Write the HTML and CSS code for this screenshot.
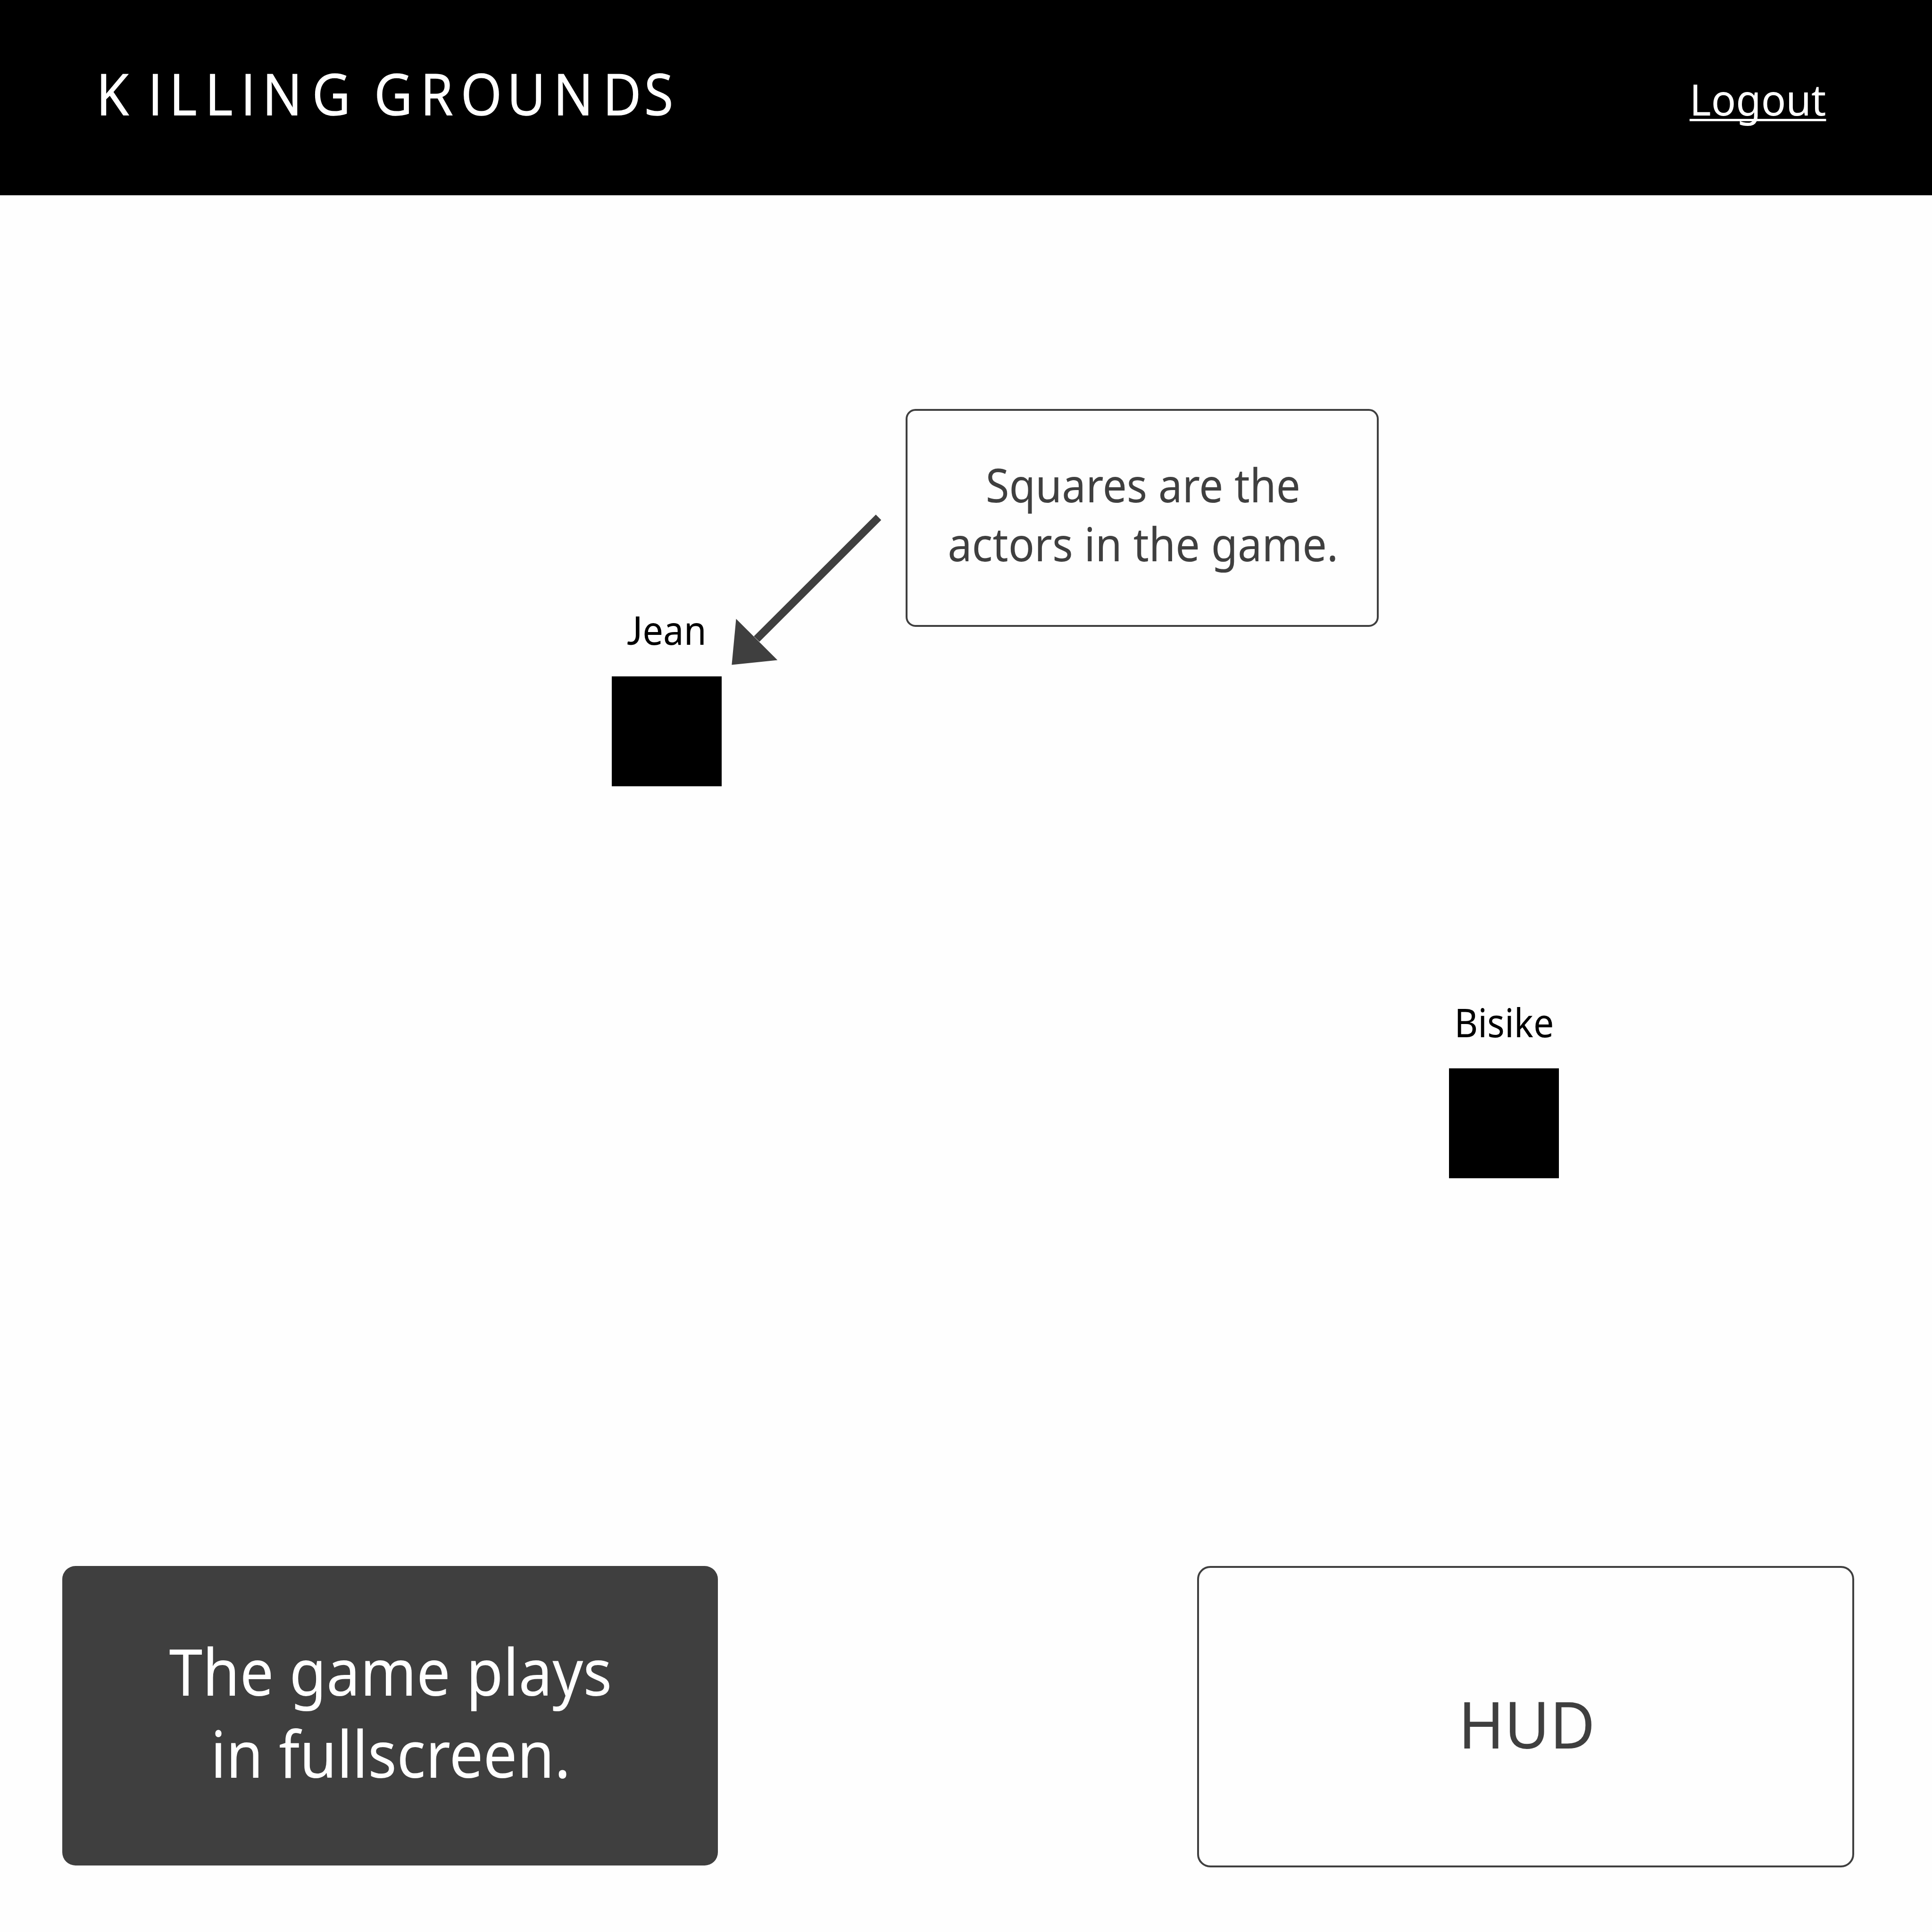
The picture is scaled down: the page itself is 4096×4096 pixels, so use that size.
FILE: index.html
```html
<!DOCTYPE html>
<html lang="en">
<head>
<meta charset="utf-8">
<title>Killing Grounds</title>
<link rel="stylesheet" href="styles.css">
</head>
<body>
<div class="page">
  <header class="header">
    <svg class="brand" viewBox="190 90 1260 210" role="img" aria-label="Killing Grounds">
      <text class="brand-text" transform="scale(.92 1)" y="244.5" x="222 341.1 390.2 472.8 554.8 604.5 719.3 800 862.2 969.1 1062 1168.5 1275.2 1389.3 1484.7">KILLING GROUNDS</text>
    </svg>
    <a class="logout" href="#">Logout</a>
  </header>
  <main class="field">
    <div class="actor actor-jean">
      <div class="name name-jean">Jean</div>
      <div class="body"></div>
    </div>
    <div class="actor actor-bisike">
      <div class="name">Bisike</div>
      <div class="body"></div>
    </div>
    <svg class="arrow" viewBox="1600 1125 345 345">
      <path d="M1926.7 1132.3 1938.5 1144.3 1670.7 1412 1658.3 1400Z"/>
      <path d="M1619.3 1361.7 1710.3 1452.3 1609.7 1462.7Z"/>
    </svg>
    <div class="callout">
      <div class="line line-squares">Squares are the</div>
      <div class="line line-actors">actors in the game.</div>
    </div>
    <div class="panels">
      <section class="panel panel-info">
        <div class="line">The game plays</div>
        <div class="line">in fullscreen.</div>
      </section>
      <section class="panel panel-hud">
        <div class="line line-hud">HUD</div>
      </section>
    </div>
  </main>
</div>
</body>
</html>
```
FILE: styles.css
```css
* { box-sizing: border-box; }

body {
  margin: 0;
  background: #fefefe;
  color: #000;
  font-family: "Noto Sans", "Open Sans", sans-serif;
}

.page {
  display: flex;
  flex-direction: column;
  width: 4096px;
  height: 4096px;
  overflow: hidden;
}

.header {
  display: flex;
  justify-content: space-between;
  align-items: flex-start;
  flex: none;
  height: 413.5px;
  padding: 90px 224.5px 0 190px;
  background: #000;
}

.brand {
  width: 1260px;
  height: 210px;
  overflow: visible;
}

.brand-text {
  fill: #fff;
  stroke: #fff;
  stroke-width: 1.5px;
  font: 400 121.5px "Open Sans", sans-serif;
}

.logout {
  margin-top: 70.4px;
  color: #fff;
  font-size: 90.6px;
  line-height: 100px;
  text-decoration: underline;
  text-decoration-thickness: 5px;
  text-underline-offset: 7px;
  text-decoration-skip-ink: none;
  transform: scaleX(.96);
  transform-origin: right;
}

.field {
  position: relative;
  display: flex;
  flex-direction: column;
  justify-content: flex-end;
  flex: 1;
}

.actor {
  position: absolute;
  display: flex;
  flex-direction: column;
  align-items: center;
  gap: 48.5px;
  width: 233px;
}

.actor-jean { left: 1297px; top: 871.5px; }
.actor-bisike { left: 3072px; top: 1703px; }

.name {
  font-size: 83.7px;
  line-height: 100px;
  white-space: nowrap;
  transform: scaleX(.92);
}

.name-jean { transform: scaleX(.93); }
.name-jean::first-letter { font-family: Lato, sans-serif; }

.body { width: 233px; height: 233px; background: #000; }

.arrow {
  position: absolute;
  left: 1542px;
  top: 670.7px;
  width: 332.5px;
  height: 332.5px;
  fill: #3f3f3f;
}

.callout {
  position: absolute;
  left: 1919.8px;
  top: 453.9px;
  width: 1003.6px;
  height: 461.6px;
  padding-top: 93.7px;
  border: 4px solid #3f3f3f;
  border-radius: 21px;
  color: #3f3f3f;
  font-size: 98.6px;
  line-height: 125.3px;
  text-align: center;
}

.line { white-space: nowrap; }
.line-squares { transform: translateX(1.5px) scaleX(.919); }
.line-actors { transform: translateX(1.5px) scaleX(.929); }

.panels {
  display: flex;
  justify-content: space-between;
  align-items: flex-start;
  height: 776px;
  padding: 0 164.6px 0 132px;
}

.panel {
  border-radius: 28px;
  font-size: 136.5px;
  line-height: 173.4px;
  text-align: center;
}

.panel-info {
  width: 1390px;
  height: 635.3px;
  padding-top: 136.3px;
  background: #3f3f3f;
  color: #fff;
}

.panel-info .line { transform: translateX(1px) scaleX(.935); }

.panel-hud {
  width: 1393.6px;
  height: 639px;
  padding-top: 243.7px;
  border: 4px solid #3f3f3f;
  color: #3f3f3f;
}

.line-hud { transform: translateX(2px) scaleX(.965); }
```
